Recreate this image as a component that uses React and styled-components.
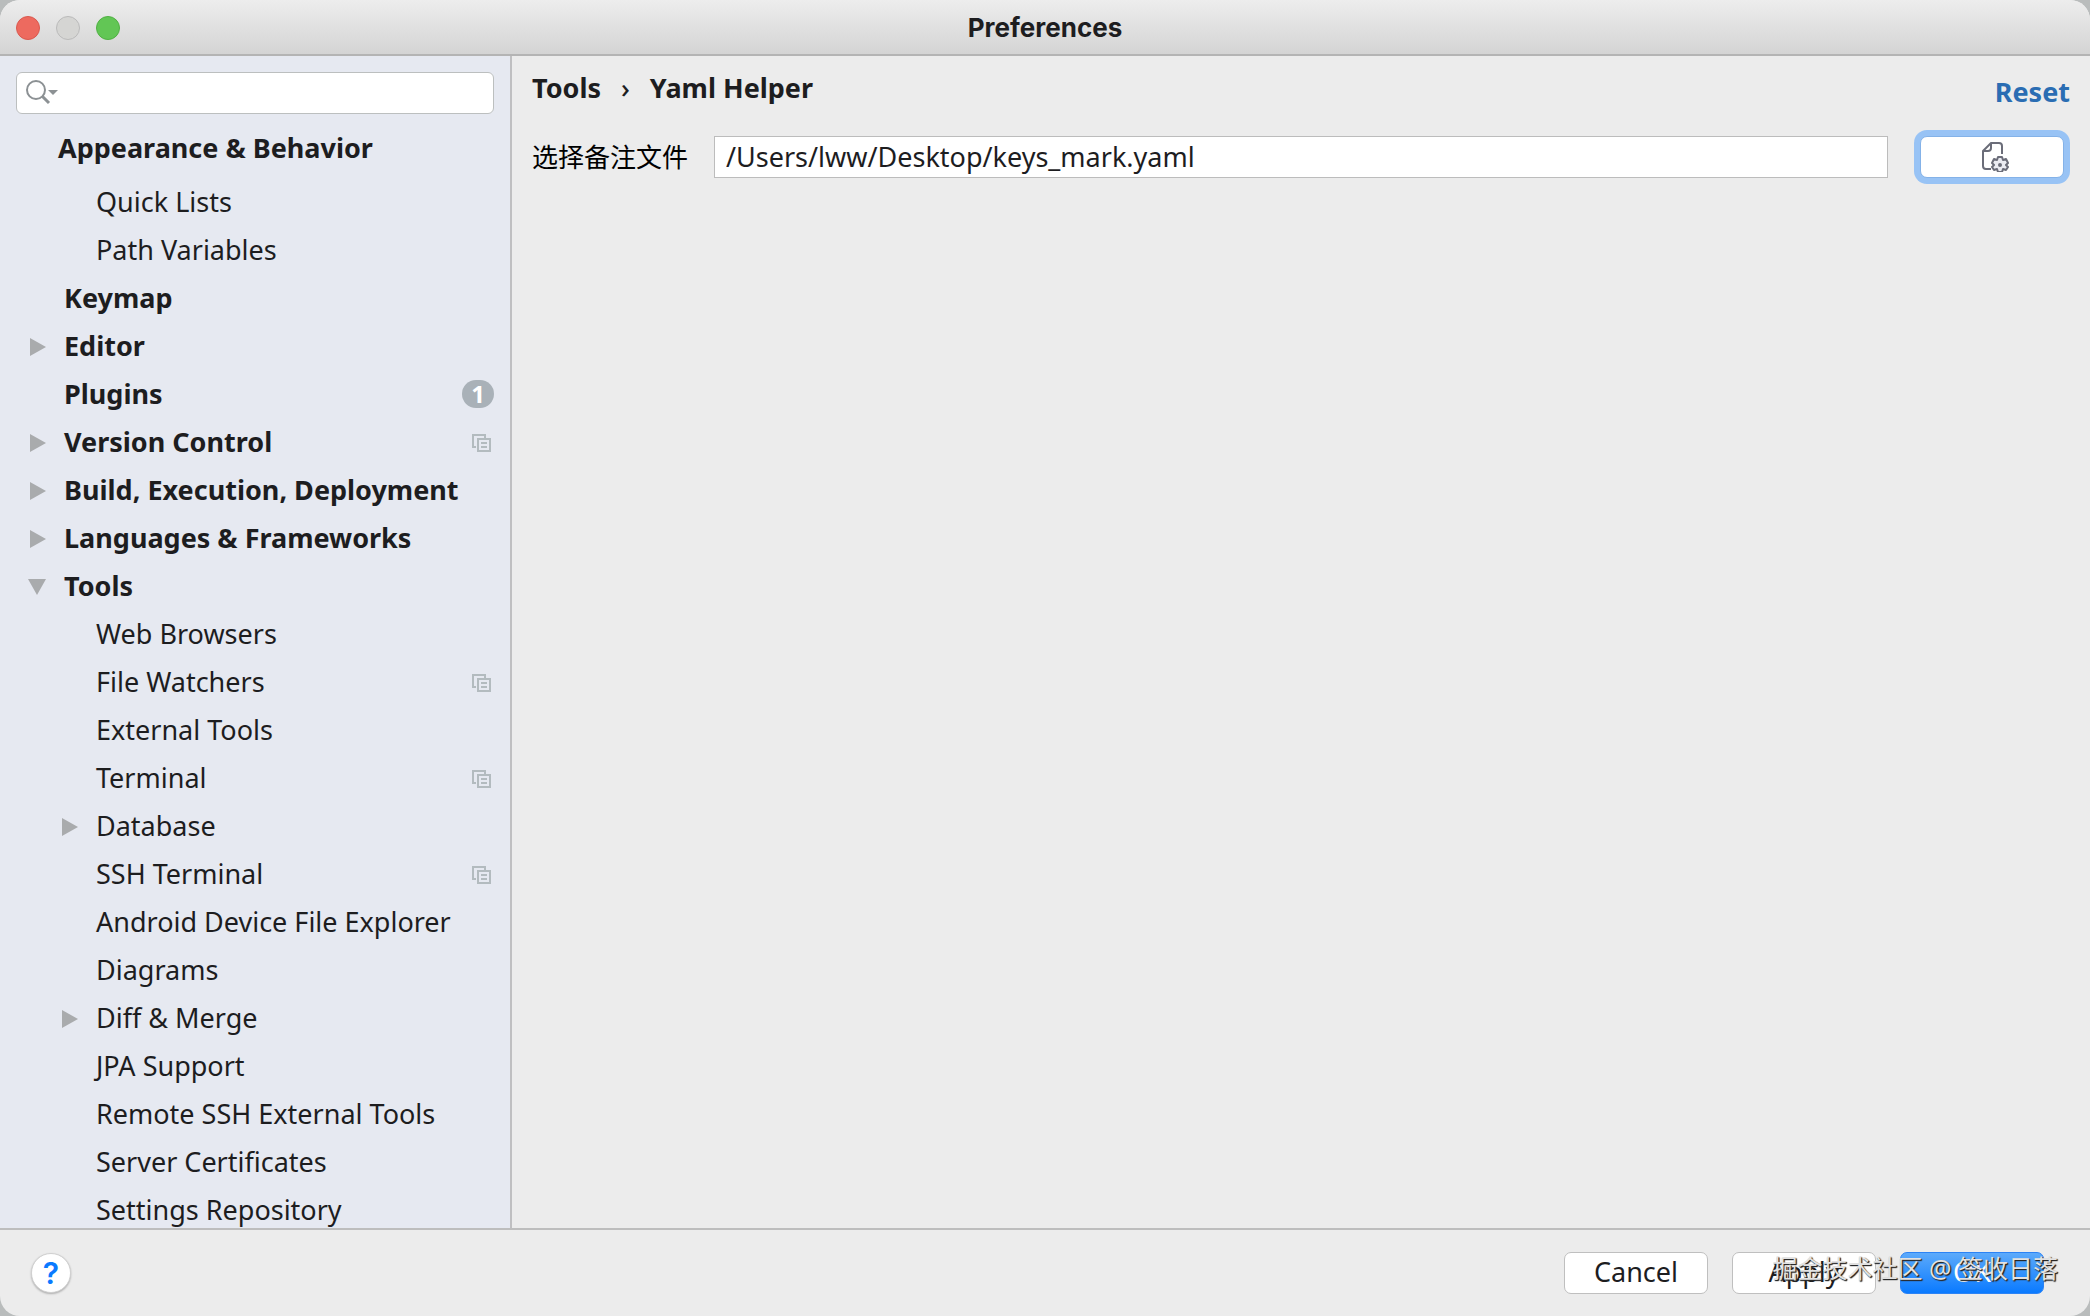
import React from "react";
import styled, { createGlobalStyle, css } from "styled-components";

const uiFont = '"Noto Sans", "Noto Sans CJK SC", sans-serif';

const GlobalStyle = createGlobalStyle`
  * { box-sizing: border-box; }
  body { margin: 0; background: #b9bcbc; }
  button, input { font: inherit; color: inherit; }
`;

const Window = styled.div`
  position: relative;
  display: flex;
  flex-direction: column;
  height: 100vh;
  overflow: hidden;
  border-radius: 20px;
  background: #ececec;
  color: #1d1d1f;
  font-family: ${uiFont};
  font-size: 27px;
  line-height: 36px;
`;

const TitleBar = styled.header`
  display: grid;
  grid-template-columns: 1fr auto 1fr;
  align-items: center;
  flex: none;
  height: 56px;
  padding: 2px 16px 0;
  border-bottom: 2px solid #b4b4b4;
  background: linear-gradient(#ededed, #d4d4d4);
`;

const Lights = styled.div`
  display: flex;
  gap: 16px;
`;

const Light = styled.button`
  width: 24px;
  height: 24px;
  padding: 0;
  border: 1px solid ${(p) => p.$edge};
  border-radius: 50%;
  background: ${(p) => p.$fill};
`;

const Title = styled.h1`
  margin: 0;
  font: 700 26px/36px Inter, sans-serif;
`;

const Body = styled.div`
  display: flex;
  flex: 1;
  min-height: 0;
`;

const Sidebar = styled.aside`
  display: flex;
  flex-direction: column;
  flex: none;
  width: 512px;
  overflow: hidden;
  border-right: 2px solid #bfbfc1;
  background: #e6e9f1;
`;

const SearchBox = styled.label`
  display: flex;
  align-items: center;
  flex: none;
  height: 42px;
  margin: 16px 16px 0;
  padding: 0 8px 2px;
  border: 1px solid #bcbfbf;
  border-radius: 6px;
  background: #fff;
`;

const SearchInput = styled.input`
  flex: 1;
  min-width: 0;
  border: 0;
  outline: 0;
  background: transparent;
`;

const GroupHeading = styled.h2`
  flex: none;
  margin: 0;
  padding: 16px 0 12px 58px;
  font-size: 27px;
  line-height: 36px;
`;

const Tree = styled.ul`
  margin: 0;
  padding: 0;
  list-style: none;
`;

const TreeRow = styled.button`
  display: flex;
  align-items: center;
  width: 100%;
  height: 48px;
  padding: 0 16px 0 ${(p) => (p.$child ? 60 : 28)}px;
  border: 0;
  background: none;
  font-weight: ${(p) => (p.$child ? 400 : 700)};
  text-align: left;
  white-space: nowrap;
`;

const ArrowSlot = styled.span`
  display: flex;
  flex: none;
  width: 36px;
`;

const RowLabel = styled.span`
  flex: 1;
`;

const Badge = styled.span`
  width: 32px;
  height: 28px;
  border-radius: 14px;
  background: #a9b1b8;
  color: #fff;
  font-size: 24px;
  line-height: 28px;
  text-align: center;
`;

const Content = styled.main`
  display: flex;
  flex: 1;
  flex-direction: column;
  min-width: 0;
  padding: 12px 20px 0;
`;

const TopLine = styled.div`
  display: flex;
  justify-content: space-between;
  height: 68px;
  font-weight: 700;
`;

const Crumbs = styled.nav`
  display: flex;
  gap: 20px;
  height: 40px;
  align-items: center;
`;

const Separator = styled.span`
  font-weight: 500;
`;

const Reset = styled.a`
  height: 48px;
  line-height: 48px;
  color: #2a6db3;
  text-decoration: none;
`;

const Field = styled.div`
  display: flex;
  align-items: center;
  height: 42px;
`;

const FieldLabel = styled.label`
  flex: none;
  margin-right: 26px;
  color: #000;
  font-size: 26px;
`;

const PathInput = styled.input`
  flex: 1;
  min-width: 0;
  height: 42px;
  margin-right: 32px;
  padding: 0 11px 2px;
  border: 1px solid #bcbcbc;
  border-radius: 0;
  outline: 0;
  background: #fff;
`;

const PushButton = styled.button`
  display: flex;
  align-items: center;
  justify-content: center;
  width: 144px;
  height: 42px;
  padding: 0 0 2px;
  border: 1px solid #bfbfbf;
  border-radius: 7px;
  background: #fff;
  ${(p) =>
    p.$focused &&
    css`
      margin-right: 6px;
      border-color: #84b2e8;
      box-shadow: 0 0 0 6px #98c3f5;
    `}
  ${(p) =>
    p.$primary &&
    css`
      border-color: #2b83f5;
      background: linear-gradient(#5caafb, #0a7aff);
      color: #fff;
    `}
`;

const Footer = styled.footer`
  display: flex;
  align-items: center;
  justify-content: space-between;
  flex: none;
  height: 88px;
  padding: 0 46px 0 31px;
  border-top: 2px solid #bdbdbd;
`;

const Help = styled.button`
  display: flex;
  align-items: center;
  justify-content: center;
  width: 40px;
  height: 40px;
  padding: 0;
  border: 1px solid #d0d0d0;
  border-radius: 50%;
  background: #fff;
  box-shadow: 0 1px 2px #0004;
  color: #0a7aff;
  font: 600 30px/36px Inter, sans-serif;
`;

const Actions = styled.div`
  display: flex;
  gap: 24px;
`;

const Watermark = styled.span`
  position: absolute;
  right: 32px;
  bottom: 30px;
  color: #e2e2e2;
  font: 25px/36px "Noto Sans", "Noto Sans CJK SC", sans-serif;
  text-shadow: 1px 1px 1px #222, 1px 1px 1px #444;
  pointer-events: none;
`;

const SearchIcon = () => (
  <svg width="34" height="26" viewBox="0 0 34 26" fill="none" aria-hidden="true">
    <circle cx="11" cy="11" r="9" stroke="#8c9194" strokeWidth="2" />
    <path d="M17.5 17.5L24 24" stroke="#8c9194" strokeWidth="3" />
    <path d="M23 11h10l-5 5z" fill="#8c9194" />
  </svg>
);

const Arrow = ({ open }) => (
  <svg width="18" height="20" viewBox="0 0 18 20" fill="#a9abad" aria-hidden="true">
    <path d={open ? "M0 3h18L9 19z" : "M2 2v18l16-9z"} />
  </svg>
);

const ProjectIcon = () => (
  <svg width="24" height="22" viewBox="0 0 24 22" fill="none" stroke="#b3bbbf" strokeWidth="2" aria-label="Project level">
    <path d="M6 16H3V4h12v3" />
    <path d="M8 8h12v12H8z" />
    <path d="M11 12h6M11 16h6" />
  </svg>
);

const FileGearIcon = () => (
  <svg width="34" height="32" viewBox="-6 -1 34 32" fill="none" stroke="#6b6d79" strokeWidth="2" strokeLinejoin="round" aria-hidden="true">
    <path d="M10 28H5q-3 0-3-3V10L10 2h8q3 0 3 3v8M10 2v5q0 3-3 3H2" />
    <path fill="#ebecf2" d="M17 16h4l1 3 3-1 2 4-2 2 2 2-2 3-3-1-1 3h-4l-1-3-3 1-2-3 2-2-2-2 2-4 3 1z" />
    <circle cx="19" cy="24" r="1" fill="#6b6d79" />
  </svg>
);

const rows = [
  { label: "Quick Lists", child: true },
  { label: "Path Variables", child: true },
  { label: "Keymap" },
  { label: "Editor", arrow: true },
  { label: "Plugins", badge: 1 },
  { label: "Version Control", arrow: true, project: true },
  { label: "Build, Execution, Deployment", arrow: true },
  { label: "Languages & Frameworks", arrow: true },
  { label: "Tools", arrow: true, open: true },
  { label: "Web Browsers", child: true },
  { label: "File Watchers", child: true, project: true },
  { label: "External Tools", child: true },
  { label: "Terminal", child: true, project: true },
  { label: "Database", child: true, arrow: true },
  { label: "SSH Terminal", child: true, project: true },
  { label: "Android Device File Explorer", child: true },
  { label: "Diagrams", child: true },
  { label: "Diff & Merge", child: true, arrow: true },
  { label: "JPA Support", child: true },
  { label: "Remote SSH External Tools", child: true },
  { label: "Server Certificates", child: true },
  { label: "Settings Repository", child: true },
];

export default function App() {
  return (
    <Window>
      <GlobalStyle />
      <TitleBar>
        <Lights>
          <Light $fill="#ed6a5f" $edge="#d9594f" aria-label="Close" />
          <Light $fill="#d5d5d3" $edge="#bababa" aria-label="Minimize" />
          <Light $fill="#62c655" $edge="#50b043" aria-label="Zoom" />
        </Lights>
        <Title>Preferences</Title>
      </TitleBar>
      <Body>
        <Sidebar>
          <SearchBox>
            <SearchIcon />
            <SearchInput type="text" aria-label="Search settings" />
          </SearchBox>
          <GroupHeading>Appearance &amp; Behavior</GroupHeading>
          <Tree>
            {rows.map((row) => (
              <li key={row.label}>
                <TreeRow type="button" $child={row.child}>
                  <ArrowSlot>{row.arrow && <Arrow open={row.open} />}</ArrowSlot>
                  <RowLabel>{row.label}</RowLabel>
                  {row.badge && <Badge>{row.badge}</Badge>}
                  {row.project && <ProjectIcon />}
                </TreeRow>
              </li>
            ))}
          </Tree>
        </Sidebar>
        <Content>
          <TopLine>
            <Crumbs aria-label="Breadcrumb">
              <span>Tools</span>
              <Separator>›</Separator>
              <span>Yaml Helper</span>
            </Crumbs>
            <Reset href="#reset">Reset</Reset>
          </TopLine>
          <Field>
            <FieldLabel htmlFor="path">选择备注文件</FieldLabel>
            <PathInput id="path" type="text" defaultValue="/Users/lww/Desktop/keys_mark.yaml" />
            <PushButton type="button" $focused aria-label="Choose file">
              <FileGearIcon />
            </PushButton>
          </Field>
        </Content>
      </Body>
      <Footer>
        <Help type="button" aria-label="Help">?</Help>
        <Actions>
          <PushButton type="button">Cancel</PushButton>
          <PushButton type="button">Apply</PushButton>
          <PushButton type="button" $primary>OK</PushButton>
        </Actions>
      </Footer>
      <Watermark>掘金技术社区 @ 签收日落</Watermark>
    </Window>
  );
}
